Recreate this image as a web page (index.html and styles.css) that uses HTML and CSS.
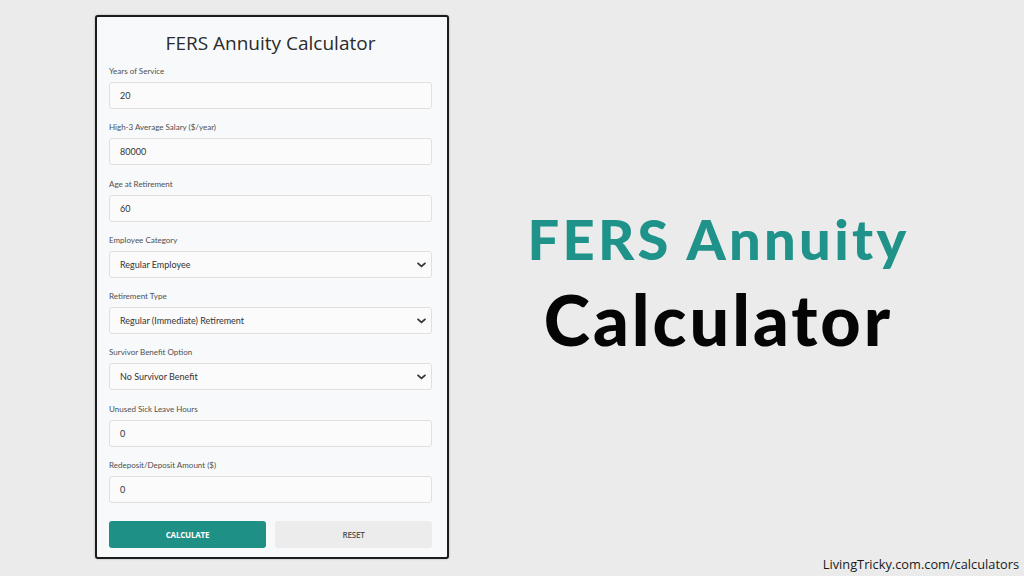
FILE: index.html
```
<!DOCTYPE html>
<html>
<head>
<meta charset="utf-8">
<link rel="stylesheet" href="styles.css">
</head>
<body>
<div class="page">
  <div class="card">
    <h1 class="title">FERS Annuity Calculator</h1>
    <div class="field">
      <label class="label">Years of Service</label>
      <input class="control" type="text" value="20">
    </div>
    <div class="field">
      <label class="label">High-3 Average Salary ($/year)</label>
      <input class="control" type="text" value="80000">
    </div>
    <div class="field">
      <label class="label">Age at Retirement</label>
      <input class="control" type="text" value="60">
    </div>
    <div class="field">
      <label class="label">Employee Category</label>
      <div class="select-wrap">
        <select class="control"><option>Regular Employee</option></select>
        <svg class="chev" viewBox="0 0 10 6" width="9" height="6"><path d="M1.2 1.2 L5 4.6 L8.8 1.2" fill="none" stroke="#333" stroke-width="2" stroke-linecap="round" stroke-linejoin="round"/></svg>
      </div>
    </div>
    <div class="field">
      <label class="label">Retirement Type</label>
      <div class="select-wrap">
        <select class="control"><option>Regular (Immediate) Retirement</option></select>
        <svg class="chev" viewBox="0 0 10 6" width="9" height="6"><path d="M1.2 1.2 L5 4.6 L8.8 1.2" fill="none" stroke="#333" stroke-width="2" stroke-linecap="round" stroke-linejoin="round"/></svg>
      </div>
    </div>
    <div class="field">
      <label class="label">Survivor Benefit Option</label>
      <div class="select-wrap">
        <select class="control"><option>No Survivor Benefit</option></select>
        <svg class="chev" viewBox="0 0 10 6" width="9" height="6"><path d="M1.2 1.2 L5 4.6 L8.8 1.2" fill="none" stroke="#333" stroke-width="2" stroke-linecap="round" stroke-linejoin="round"/></svg>
      </div>
    </div>
    <div class="field">
      <label class="label">Unused Sick Leave Hours</label>
      <input class="control" type="text" value="0">
    </div>
    <div class="field">
      <label class="label">Redeposit/Deposit Amount ($)</label>
      <input class="control" type="text" value="0">
    </div>
    <div class="buttons">
      <button class="btn btn-calc">CALCULATE</button>
      <button class="btn btn-reset">RESET</button>
    </div>
  </div>
  <div class="hero">
    <div class="hero-line1">FERS Annuity</div>
    <div class="hero-line2">Calculator</div>
  </div>
</div>
<div class="footer">LivingTricky.com.com/calculators</div>
</body>
</html>
```
FILE: styles.css
```
* { box-sizing: border-box; }
html, body { margin: 0; padding: 0; }
body {
  width: 1024px;
  height: 576px;
  background: #ebebeb;
  font-family: "Open Sans", "Liberation Sans", sans-serif;
  overflow: hidden;
  position: relative;
}
.page {
  display: flex;
  padding: 15px 0 0 95px;
}
.card {
  width: 354px;
  height: 544px;
  border: 2px solid #1c1c1c;
  border-radius: 3px;
  background: #f8f9fa;
  padding: 13px 15px 0 12px;
  box-shadow: 0 0 2px rgba(0,0,0,0.3);
}
.title {
  margin: 0 0 9px 0;
  text-align: center;
  font-size: 19px;
  line-height: 26px;
  font-weight: 500;
  color: #2b2b2b;
}
.field {
  display: flex;
  flex-direction: column;
  margin-bottom: 12.3px;
}
.label {
  font-family: "Lato", "Open Sans", sans-serif;
  font-size: 8px;
  line-height: 12px;
  color: #4f4f4f;
  margin-bottom: 5px;
}
.control {
  width: 100%;
  height: 27px;
  border: 1px solid #e0e0e0;
  border-radius: 3px;
  background: #fbfbfb;
  padding: 0 10px;
  font-family: "Lato", "Open Sans", sans-serif;
  font-size: 9px;
  color: #333;
  outline: none;
  appearance: none;
  -webkit-appearance: none;
  margin: 0;
}
.select-wrap {
  position: relative;
}
.chev {
  position: absolute;
  right: 6px;
  top: 11px;
}
.buttons {
  display: flex;
  gap: 9px;
  margin-top: 18px;
}
.btn {
  flex: 1;
  height: 27px;
  border: none;
  border-radius: 3px;
  font-family: "Open Sans", "Liberation Sans", sans-serif;
  font-size: 8px;
  font-weight: 700;
  letter-spacing: -0.2px;
}
.btn-calc {
  background: #1e9086;
  color: #ffffff;
}
.btn-reset {
  background: #ececec;
  color: #555;
  font-weight: 600;
}
.hero {
  flex: 1;
  display: flex;
  flex-direction: column;
  align-items: center;
  justify-content: center;
  padding-right: 36px;
  padding-bottom: 11px;
  height: 544px;
}
.hero-line1 {
  font-family: "Lato", "Open Sans", sans-serif;
  font-weight: 900;
  font-size: 56px;
  line-height: 66px;
  margin-bottom: 9px;
  color: #1f938a;
  letter-spacing: 3.3px;
}
.hero-line2 {
  font-family: "Lato", "Open Sans", sans-serif;
  font-weight: 900;
  font-size: 70px;
  line-height: 76px;
  color: #050505;
  letter-spacing: 3px;
}
.footer {
  position: absolute;
  right: 5px;
  bottom: 3px;
  font-size: 12.8px;
  color: #1a1a1a;
}
```
